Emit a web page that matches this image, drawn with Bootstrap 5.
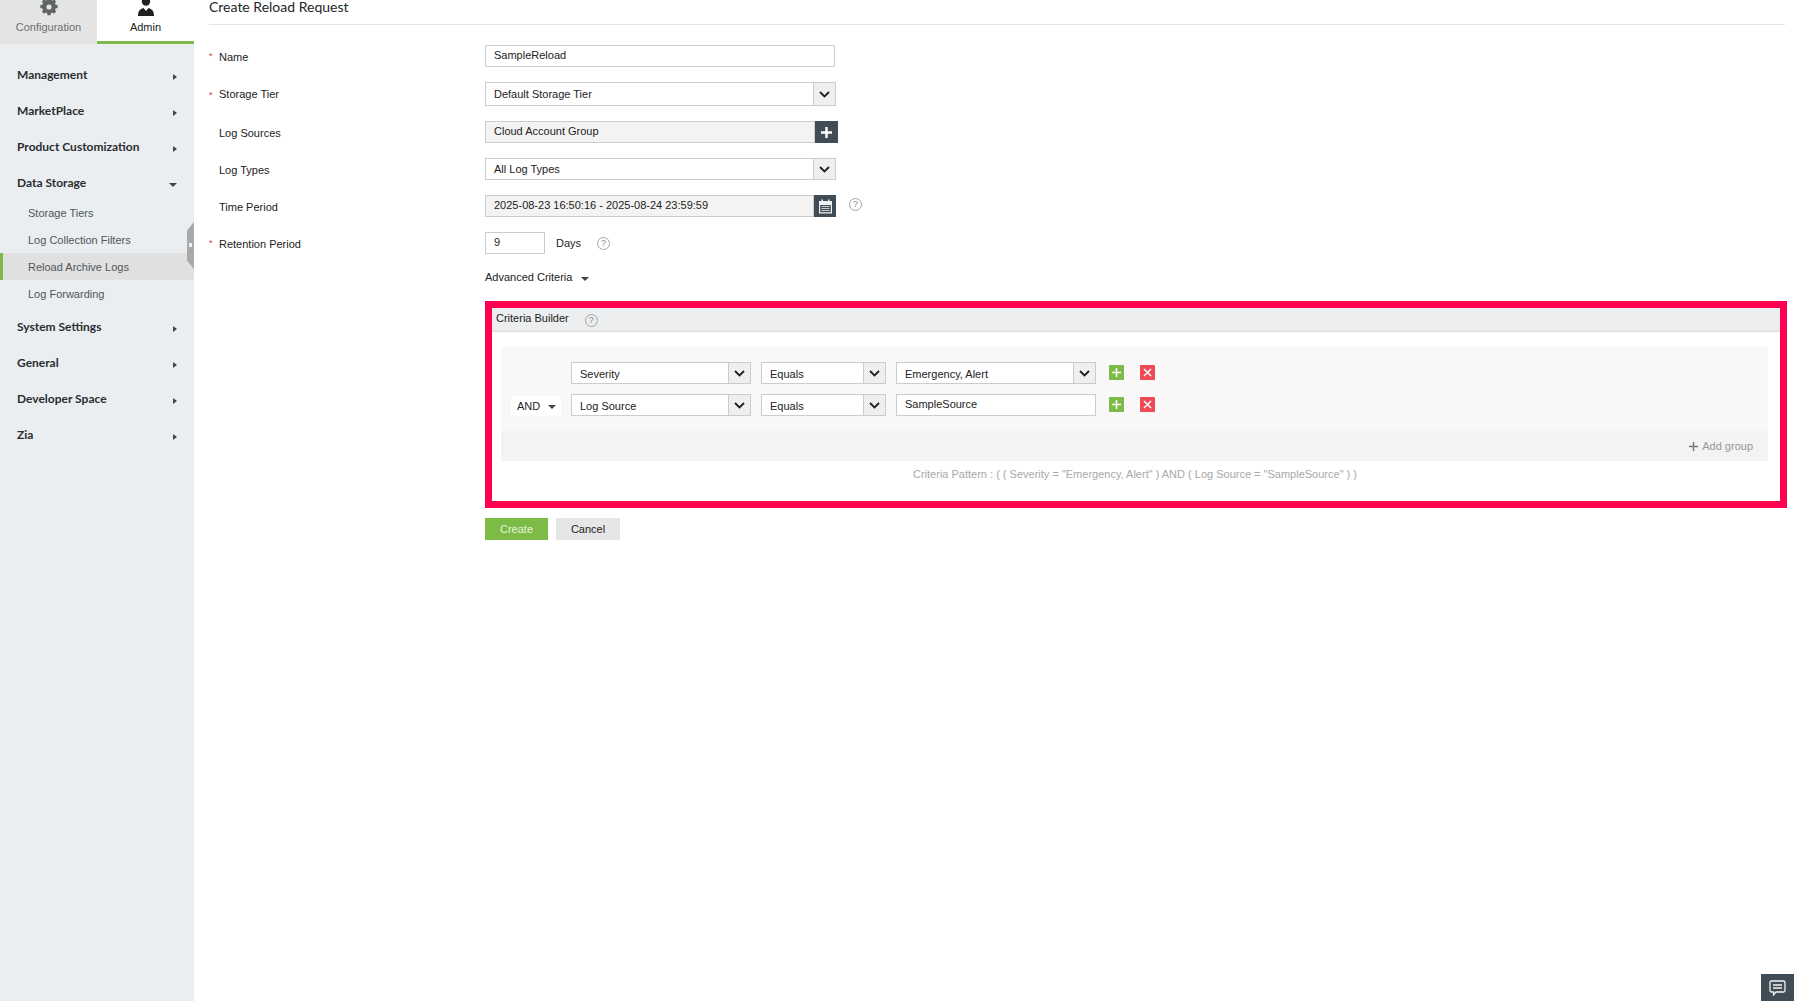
<!DOCTYPE html>
<html lang="en">
<head>
<meta charset="utf-8">
<title>Create Reload Request</title>
<link href="https://cdn.jsdelivr.net/npm/bootstrap@5.3.0/dist/css/bootstrap.min.css" rel="stylesheet">
<style>
html,body{height:100%;}
body{font-family:"Liberation Sans",Arial,sans-serif;font-size:11px;color:#222;background:#fff;overflow:hidden;}
.app-shell{height:1001px;}
.side-rail{width:194px;flex:none;background:#eaeef0;position:relative;}
.rail-tab{width:97px;height:44px;text-align:center;padding-top:21px;position:relative;overflow:hidden;line-height:13px;}
.rail-tab svg{position:absolute;left:50%;top:-3px;transform:translateX(-50%);}
.tab-off{background:#e3e3e3 repeating-conic-gradient(#e0e0e0 0 25%,#e9e9e9 0 50%) 0 0/2px 2px;color:#6d6d6d;}
.tab-on{background:#fff;color:#222;border-bottom:3px solid #7cbb46;}
.rail-menu{padding-top:13px;}
.rail-head{height:36px;padding:0 17px 0 17px;font-family:Lato,sans-serif;font-weight:700;font-size:12px;color:#2a2d30;}
.rail-head i{margin-top:3px;}
.rail-sub{height:27px;padding:2px 0 0 28px;color:#4f5559;}
.sub-first{margin-top:-2px;}
.sub-last{margin-bottom:2px;}
.sub-active{background:#dfdfdf repeating-conic-gradient(#dcdcdc 0 25%,#e5e5e5 0 50%) 0 0/2px 2px;border-left:3px solid #7cbb46;padding-left:25px;}
.tri-r{width:0;height:0;border-left:4px solid #444;border-top:3.5px solid transparent;border-bottom:3.5px solid transparent;}
.tri-d{width:0;height:0;border-top:4px solid #444;border-left:4px solid transparent;border-right:4px solid transparent;}
.rail-grip{position:absolute;right:0;top:222px;width:7px;height:47px;background:#a9a9a9;clip-path:polygon(100% 0,100% 100%,0 82%,0 18%);}
.rail-grip::after{content:"";position:absolute;left:2px;top:21px;width:3px;height:4px;background:#eee;}
.page-main{padding:0 13px 0 15px;min-width:0;}
.page-title{font-family:Lato,sans-serif;font-size:14px;font-weight:400;color:#23262a;margin:0;height:25px;line-height:13px;border-bottom:1px solid #e3e3e3;}
.field-row{height:22px;margin-bottom:15px;}
.row-tall{height:24px;}
.field-label{width:276px;flex:none;padding-left:10px;position:relative;}
.label-low{padding-top:2px;}
.req-star{position:absolute;left:0;top:3px;color:#d9334a;font-size:9px;}
.txt-box{height:22px;border:1px solid #ccc;background:#fff;padding:0 8px;line-height:19px;}
.box-grey{background:#f3f3f3;line-height:18px;}
.select-box{height:100%;border:1px solid #ccc;background:#fff;}
.select-val{padding:0 8px;flex:1;min-width:0;line-height:20px;}
.val-low{padding-top:1px;}
.row-tall .select-val{line-height:22px;}
.select-btn{width:22px;flex:none;padding-right:1px;border-left:1px solid #ccc;background:#ededed repeating-conic-gradient(#eaeaea 0 25%,#f4f4f4 0 50%) 0 0/2px 2px;}
.dark-btn{background:#414d56;flex:none;}
.help-mark{width:13px;height:13px;border:1px solid #a5a5a5;border-radius:50%;color:#8a8a8a;font-size:9px;line-height:11px;text-align:center;flex:none;}
.help-time{margin:0 0 4px 13px;}
.help-crit{margin:2px 0 0 16px;}
.days-word{margin:0 16px 0 11px;}
.adv-row{height:14px;margin:16px 0 0 276px;}
.adv-tri{margin:4px 0 0 9px;}
.crit-frame{margin:17px 0 0 276px;width:1302px;height:207px;border:7px solid #ff0050;}
.crit-head{height:24px;background:#eceef0;border-bottom:1px solid #ddd;padding-left:4px;line-height:12px;padding-top:4px;}
.crit-group{margin:15px 12px 0 9px;height:114px;background:#f8f8f8;}
.crit-rows{height:84px;padding:15px 0 0 10px;}
.crit-row{height:22px;margin-bottom:10px;}
.crit-spacer{width:60px;flex:none;}
.and-pick{width:50px;height:20px;background:#fff;margin-right:10px;padding:1px 0 0 6px;margin-top:2px;flex:none;}
.mini-btn{width:15px;height:15px;border-radius:1px;flex:none;margin-top:3px;}
.btn-add{background:#7cbb46;margin-left:13px;}
.btn-del{background:#ee4a56;margin-left:16px;}
.gap-ten{margin-left:10px;}
.crit-foot{height:30px;background:#f3f3f3;padding-right:15px;color:#94989b;}
.crit-pattern{color:#a8a8a8;text-align:center;padding:5px 2px 0 0;}
.action-row{margin:10px 0 0 276px;}
.btn-create{width:63px;height:22px;background:#7cbb46;color:#e8f3dd;border:0;border-radius:0;font-size:11px;padding:0;}
.btn-cancel{width:64px;height:22px;background:#e6e6e6;color:#222;border:0;border-radius:0;font-size:11px;padding:0;margin-left:8px;}
.chat-tab{position:absolute;right:4px;bottom:0;width:33px;height:27px;background:#414d56;}
.w350{width:350px;}.w351{width:351px;}.w330{width:330px;}.w329{width:329px;}.w60{width:60px;}.w180{width:180px;}.w125{width:125px;}.w200{width:200px;}
.btn-w23{width:23px;}.btn-w22{width:22px;}
</style>
</head>
<body>
<div class="app-shell d-flex position-relative">
  <aside class="side-rail">
    <div class="d-flex">
      <div class="rail-tab tab-off">
        <svg width="18" height="20" viewBox="0 0 18 20"><path fill="#5f6467" d="M7.500 4h3l.4 2 1.400.6 1.700-1.100 2.100 2.100-1.100 1.700.6 1.400 2 .4v3l-2 .4-.6 1.400 1.100 1.700-2.100 2.100-1.700-1.100-1.400.6-.4 2h-3l-.4-2-1.400-.6-1.700 1.100-2.100-2.100 1.100-1.700-.6-1.400-2-.4v-3l2-.4.6-1.400-1.100-1.700 2.100-2.100 1.700 1.100 1.400-.6z" transform="translate(0 -3)"/><circle cx="9" cy="10" r="2.600" fill="#e3e3e3"/></svg>
        <div>Configuration</div>
      </div>
      <div class="rail-tab tab-on">
        <svg width="18" height="20" viewBox="0 0 18 20"><circle cx="9" cy="4.500" r="4.200" fill="#1e2224"/><path fill="#1e2224" d="M1 19c0-5 2-7 5.500-8L9 14l2.500-3c3.500 1 5.500 3 5.500 8z"/></svg>
        <div>Admin</div>
      </div>
    </div>
    <nav class="rail-menu">
      <div class="rail-head d-flex align-items-center justify-content-between"><span>Management</span><i class="tri-r"></i></div>
      <div class="rail-head d-flex align-items-center justify-content-between"><span>MarketPlace</span><i class="tri-r"></i></div>
      <div class="rail-head d-flex align-items-center justify-content-between"><span>Product Customization</span><i class="tri-r"></i></div>
      <div class="rail-head d-flex align-items-center justify-content-between"><span>Data Storage</span><i class="tri-d"></i></div>
      <div class="rail-sub sub-first d-flex align-items-center">Storage Tiers</div>
      <div class="rail-sub d-flex align-items-center">Log Collection Filters</div>
      <div class="rail-sub sub-active d-flex align-items-center">Reload Archive Logs</div>
      <div class="rail-sub sub-last d-flex align-items-center">Log Forwarding</div>
      <div class="rail-head d-flex align-items-center justify-content-between"><span>System Settings</span><i class="tri-r"></i></div>
      <div class="rail-head d-flex align-items-center justify-content-between"><span>General</span><i class="tri-r"></i></div>
      <div class="rail-head d-flex align-items-center justify-content-between"><span>Developer Space</span><i class="tri-r"></i></div>
      <div class="rail-head d-flex align-items-center justify-content-between"><span>Zia</span><i class="tri-r"></i></div>
    </nav>
    <div class="rail-grip"></div>
  </aside>

  <main class="page-main flex-grow-1">
    <h1 class="page-title">Create Reload Request</h1>
    <form class="pt-3 mt-1">
      <div class="field-row d-flex align-items-center">
        <label class="field-label label-low"><span class="req-star">*</span>Name</label>
        <div class="txt-box w350">SampleReload</div>
      </div>
      <div class="field-row row-tall d-flex align-items-center">
        <label class="field-label"><span class="req-star">*</span>Storage Tier</label>
        <div class="select-box d-flex w351"><div class="select-val">Default Storage Tier</div><div class="select-btn d-flex align-items-center justify-content-center"><svg width="11" height="7" viewBox="0 0 11 7"><path d="M1 1l4.500 4.500L10 1" fill="none" stroke="#1d2124" stroke-width="1.800"/></svg></div></div>
      </div>
      <div class="field-row d-flex align-items-center">
        <label class="field-label label-low">Log Sources</label>
        <div class="d-flex h-100">
          <div class="txt-box box-grey w330">Cloud Account Group</div>
          <div class="dark-btn btn-w23 d-flex align-items-center justify-content-center"><svg width="11" height="11" viewBox="0 0 11 11"><path d="M5.500 0v11M0 5.500h11" stroke="#fff" stroke-width="2.400"/></svg></div>
        </div>
      </div>
      <div class="field-row d-flex align-items-center">
        <label class="field-label label-low">Log Types</label>
        <div class="select-box d-flex w351"><div class="select-val">All Log Types</div><div class="select-btn d-flex align-items-center justify-content-center"><svg width="11" height="7" viewBox="0 0 11 7"><path d="M1 1l4.500 4.500L10 1" fill="none" stroke="#1d2124" stroke-width="1.800"/></svg></div></div>
      </div>
      <div class="field-row d-flex align-items-center">
        <label class="field-label label-low">Time Period</label>
        <div class="d-flex h-100">
          <div class="txt-box box-grey w329">2025-08-23 16:50:16 - 2025-08-24 23:59:59</div>
          <div class="dark-btn btn-w22 d-flex align-items-center justify-content-center"><svg width="15" height="15" viewBox="0 0 15 15"><path fill="#f2f2f2" d="M1 2h2.500V.5h1.500V2h5V.5h1.500V2H14v12.500H1zM2.200 6v7.300h10.600V6z"/><path fill="#c9cccd" d="M3.500 7h8v1h-8zM3.500 9h8v1h-8zM3.500 11h8v1h-8z"/></svg></div>
        </div>
        <div class="help-mark help-time">?</div>
      </div>
      <div class="field-row d-flex align-items-center">
        <label class="field-label label-low"><span class="req-star">*</span>Retention Period</label>
        <div class="txt-box w60">9</div>
        <span class="days-word">Days</span>
        <div class="help-mark">?</div>
      </div>
      <div class="adv-row d-flex align-items-center">
        <span>Advanced Criteria</span><i class="tri-d adv-tri"></i>
      </div>
      <div class="crit-frame">
        <div class="crit-head d-flex"><span>Criteria Builder</span><div class="help-mark help-crit">?</div></div>
        <div class="crit-group">
          <div class="crit-rows">
            <div class="crit-row d-flex">
              <div class="crit-spacer"></div>
              <div class="select-box d-flex w180"><div class="select-val val-low">Severity</div><div class="select-btn d-flex align-items-center justify-content-center"><svg width="11" height="7" viewBox="0 0 11 7"><path d="M1 1l4.500 4.500L10 1" fill="none" stroke="#1d2124" stroke-width="1.800"/></svg></div></div>
              <div class="select-box d-flex w125 gap-ten"><div class="select-val val-low">Equals</div><div class="select-btn d-flex align-items-center justify-content-center"><svg width="11" height="7" viewBox="0 0 11 7"><path d="M1 1l4.500 4.500L10 1" fill="none" stroke="#1d2124" stroke-width="1.800"/></svg></div></div>
              <div class="select-box d-flex w200 gap-ten"><div class="select-val val-low">Emergency, Alert</div><div class="select-btn d-flex align-items-center justify-content-center"><svg width="11" height="7" viewBox="0 0 11 7"><path d="M1 1l4.500 4.500L10 1" fill="none" stroke="#1d2124" stroke-width="1.800"/></svg></div></div>
              <div class="mini-btn btn-add d-flex align-items-center justify-content-center"><svg width="9" height="9" viewBox="0 0 9 9"><path d="M4.500 0v9M0 4.500h9" stroke="#fff" stroke-width="1.600"/></svg></div>
              <div class="mini-btn btn-del d-flex align-items-center justify-content-center"><svg width="9" height="9" viewBox="0 0 9 9"><path d="M1 1l7 7M8 1l-7 7" stroke="#fff" stroke-width="1.500"/></svg></div>
            </div>
            <div class="crit-row d-flex">
              <div class="and-pick d-flex align-items-center"><span>AND</span><i class="tri-d ms-2"></i></div>
              <div class="select-box d-flex w180"><div class="select-val val-low">Log Source</div><div class="select-btn d-flex align-items-center justify-content-center"><svg width="11" height="7" viewBox="0 0 11 7"><path d="M1 1l4.500 4.500L10 1" fill="none" stroke="#1d2124" stroke-width="1.800"/></svg></div></div>
              <div class="select-box d-flex w125 gap-ten"><div class="select-val val-low">Equals</div><div class="select-btn d-flex align-items-center justify-content-center"><svg width="11" height="7" viewBox="0 0 11 7"><path d="M1 1l4.500 4.500L10 1" fill="none" stroke="#1d2124" stroke-width="1.800"/></svg></div></div>
              <div class="txt-box w200 gap-ten">SampleSource</div>
              <div class="mini-btn btn-add d-flex align-items-center justify-content-center"><svg width="9" height="9" viewBox="0 0 9 9"><path d="M4.500 0v9M0 4.500h9" stroke="#fff" stroke-width="1.600"/></svg></div>
              <div class="mini-btn btn-del d-flex align-items-center justify-content-center"><svg width="9" height="9" viewBox="0 0 9 9"><path d="M1 1l7 7M8 1l-7 7" stroke="#fff" stroke-width="1.500"/></svg></div>
            </div>
          </div>
          <div class="crit-foot d-flex align-items-center justify-content-end"><svg class="me-1" width="9" height="9" viewBox="0 0 9 9"><path d="M4.500 0v9M0 4.500h9" stroke="#6f7a84" stroke-width="1.500"/></svg>Add group</div>
        </div>
        <div class="crit-pattern">Criteria Pattern : ( ( Severity = "Emergency, Alert" ) AND ( Log Source = "SampleSource" ) )</div>
      </div>
      <div class="d-flex action-row">
        <button type="button" class="btn btn-create">Create</button>
        <button type="button" class="btn btn-cancel">Cancel</button>
      </div>
    </form>
  </main>
  <div class="chat-tab d-flex align-items-center justify-content-center"><svg width="17" height="16" viewBox="0 0 17 16"><path fill="none" stroke="#f2f2f2" stroke-width="1.300" d="M2.500 1h12a1.500 1.500 0 0 1 1.500 1.500v8a1.500 1.500 0 0 1-1.500 1.500H7l-2.500 3v-3h-2A1.500 1.500 0 0 1 1 10.500v-8A1.500 1.500 0 0 1 2.500 1z"/><path stroke="#f2f2f2" stroke-width="1.300" d="M4 5h9M4 8h9"/></svg></div>
</div>
<script src="https://cdn.jsdelivr.net/npm/bootstrap@5.3.0/dist/js/bootstrap.bundle.min.js"></script>
</body>
</html>
